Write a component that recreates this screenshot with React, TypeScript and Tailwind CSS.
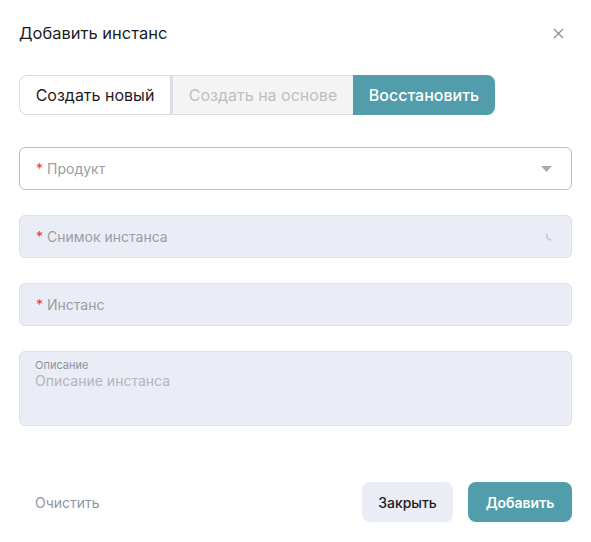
import React, { useState } from "react";

const font = { fontFamily: "Inter, 'Noto Sans', sans-serif" };

const Required = ({ label }: { label: string }) => (
  <span className="text-[14px] text-[#9a9ca6]">
    <span className="text-[#f0353f] mr-1">*</span>
    {label}
  </span>
);

const App = () => {
  const [tab, setTab] = useState(2);
  const tabs = ["Создать новый", "Создать на основе", "Восстановить"];

  return (
    <div className="w-[591px] h-[542px] bg-white px-[19px] pt-[21px]" style={font}>
      {/* Шапка */}
      <div className="flex items-center justify-between h-[24px]">
        <h2 className="text-[16.5px] text-[#1c1c1f] font-normal">Добавить инстанс</h2>
        <button className="text-[#8c8f99] mr-[8px]">
          <svg width="11" height="11" viewBox="0 0 11 11">
            <path d="M1 1L10 10M10 1L1 10" stroke="currentColor" strokeWidth="1.3" />
          </svg>
        </button>
      </div>

      {/* Переключатель режима */}
      <div className="flex mt-[30px] h-[40px]">
        {tabs.map((t, i) => (
          <button
            key={t}
            onClick={() => setTab(i)}
            className={
              i === 0
                ? "w-[152px] border border-[#d7dae2] rounded-l-[8px] bg-white text-[16px] text-[#1c1c1f]"
                : i === 1
                ? "w-[182px] border-y border-l-2 border-[#dcdfe8] bg-[#f4f4f5] text-[16px] text-[#bdbec3]"
                : "w-[142px] rounded-r-[8px] bg-[#519dab] text-[16px] font-medium text-white"
            }
          >
            {t}
          </button>
        ))}
      </div>

      {/* Поля */}
      <div className="flex flex-col gap-[25px] mt-[32px]">
        <div className="h-[43px] border border-[#a7c8d3] rounded-[6px] bg-white flex items-center justify-between px-[16px]">
          <Required label="Продукт" />
          <svg width="11" height="6" viewBox="0 0 11 6" className="mr-[3px]">
            <path d="M0 0H11L5.5 6Z" fill="#a9abb2" />
          </svg>
        </div>
        <div className="h-[43px] border border-[#dde1ea] rounded-[6px] bg-[#eaedf5] flex items-center justify-between px-[16px]">
          <Required label="Снимок инстанса" />
          <svg width="6" height="8" viewBox="0 0 6 8" className="mr-[3px]">
            <path d="M1 1C0 4 2 7 5 7" stroke="#a9abb2" strokeWidth="1" fill="none" />
          </svg>
        </div>
        <div className="h-[43px] border border-[#dde1ea] rounded-[6px] bg-[#eaedf5] flex items-center px-[16px]">
          <Required label="Инстанс" />
        </div>
        <div className="h-[75px] border border-[#dde1ea] rounded-[6px] bg-[#eaedf5] px-[15px] pt-[6px] flex flex-col">
          <span className="text-[11px] text-[#8f929c] leading-[14px]">Описание</span>
          <span className="text-[14px] text-[#b3b5bc] leading-[18px]">Описание инстанса</span>
        </div>
      </div>

      {/* Низ */}
      <div className="flex items-center justify-between mt-[56px]">
        <button className="text-[14px] text-[#9096a8] ml-[16px]">Очистить</button>
        <div className="flex gap-[15px]">
          <button className="w-[91px] h-[40px] rounded-[8px] bg-[#eaedf5] text-[14px] font-medium text-[#1c1c1f]">
            Закрыть
          </button>
          <button className="w-[104px] h-[40px] rounded-[8px] bg-[#519dab] text-[14px] font-semibold text-white">
            Добавить
          </button>
        </div>
      </div>
    </div>
  );
};

export default App;
